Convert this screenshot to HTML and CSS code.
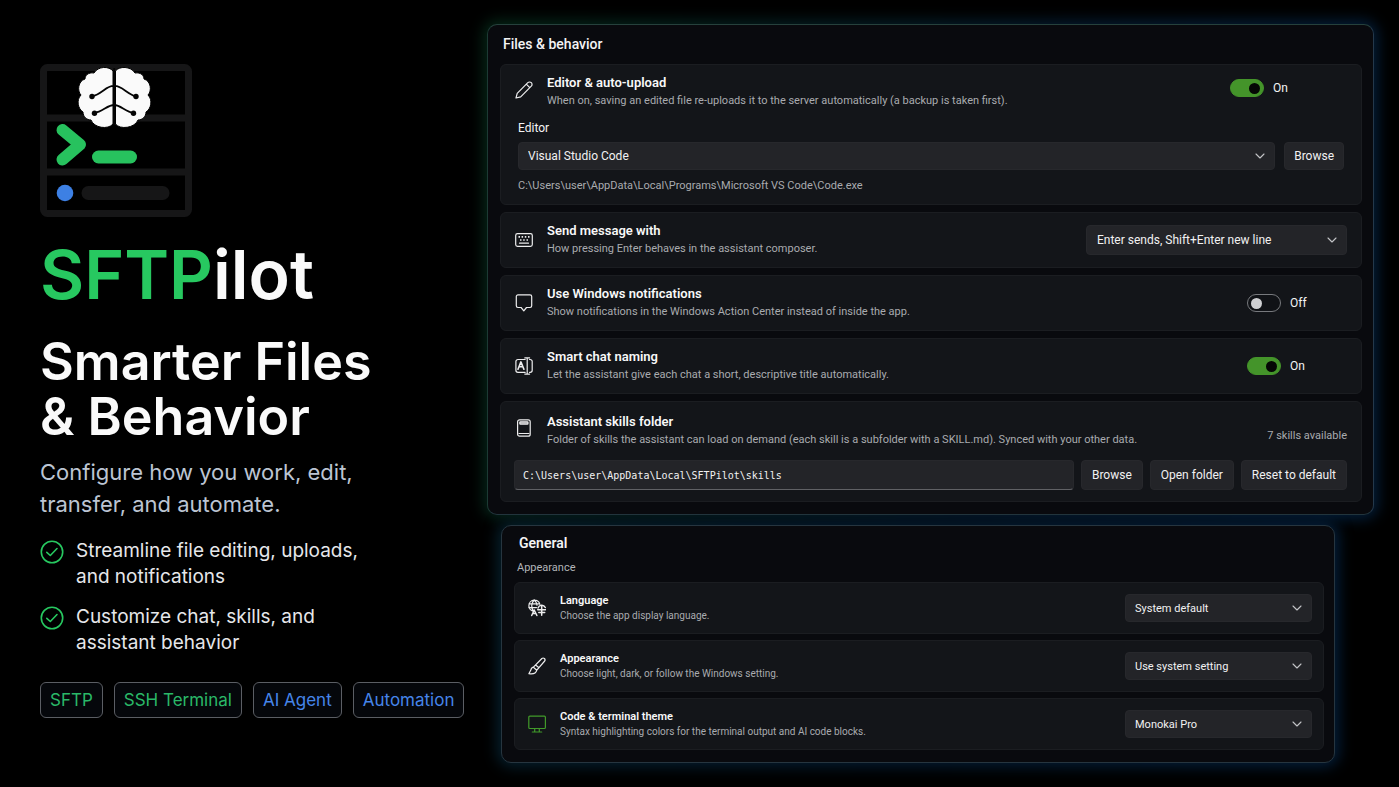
FILE: index.html
```html
<!DOCTYPE html>
<html lang="en">
<head>
<meta charset="utf-8">
<title>SFTPilot – Files &amp; behavior</title>
<link rel="stylesheet" href="styles.css">
</head>
<body>
<main class="page">
  <section class="intro">
    <svg class="logo" viewBox="0 0 152 153" aria-hidden="true">
      <rect x="3.500" y="3.500" width="145" height="146" rx="4" fill="#000" stroke="#161617" stroke-width="7"/>
      <path d="M5 54h142M5 108h142" stroke="#161617" stroke-width="7"/>
      <g fill="#fafafa" stroke="#000" stroke-width="1">
        <path d="M73 7C69 2 58 2 54 9C48 8 45 12 45 15C38 17 37 27 41 31C36 36 38 45 43 48C43 53 47 56 51 56C54 64 68 66 73 60Z"/>
        <path d="M75.500 7C79 2 91 2 95 9C101 8 104 12 104 15C111 17 112 27 108 31C113 36 111 45 106 48C106 53 102 56 98 56C95 64 80 66 75.500 60Z"/>
      </g>
      <path d="M74.200 4V61M74.200 22C67 21 62 30 52 32.500M74.200 22C81 21 87 30 96 32.500M74.200 41C67 41 63 48 54 49M74.200 41C81 41 85 48 94 49" fill="none" stroke="#050505" stroke-width="1.800"/>
      <g fill="#050505"><circle cx="52" cy="32.500" r="2.700"/><circle cx="96" cy="32.500" r="2.700"/><circle cx="54.500" cy="49.200" r="2.700"/><circle cx="93.500" cy="49.200" r="2.700"/></g>
      <path d="M22.500 66L40 80.500L22.500 95.500" fill="none" stroke="#27c25e" stroke-width="12" stroke-linecap="round" stroke-linejoin="round"/>
      <rect x="52" y="86.500" width="45" height="13" rx="6.500" fill="#27c25e"/>
      <circle cx="25" cy="129" r="8.300" fill="#3d80e4"/>
      <rect x="41.500" y="122" width="88" height="14" rx="7" fill="#161617"/>
    </svg>
    <h1 class="brand"><span class="brand-accent">SFTP</span>ilot</h1>
    <h2 class="headline">Smarter Files<br>&amp; Behavior</h2>
    <p class="lead">Configure how you work, edit,<br>transfer, and automate.</p>
    <ul class="points">
      <li class="point">
        <svg class="check" viewBox="0 0 24 24" aria-hidden="true"><circle cx="12" cy="12" r="10.700"/><path d="M6.800 12.300L10.300 15.500L17 8.500"/></svg>
        <span>Streamline file editing, uploads,<br>and notifications</span>
      </li>
      <li class="point">
        <svg class="check" viewBox="0 0 24 24" aria-hidden="true"><circle cx="12" cy="12" r="10.700"/><path d="M6.800 12.300L10.300 15.500L17 8.500"/></svg>
        <span>Customize chat, skills, and<br>assistant behavior</span>
      </li>
    </ul>
    <ul class="tags">
      <li class="tag tag-green">SFTP</li>
      <li class="tag tag-green">SSH Terminal</li>
      <li class="tag tag-blue">AI Agent</li>
      <li class="tag tag-blue">Automation</li>
    </ul>
  </section>

  <div class="panels">
    <section class="panel panel-files">
      <h2 class="panel-title">Files &amp; behavior</h2>
      <div class="cards">
        <article class="card card-editor">
          <div class="row row-top">
            <svg class="icon" viewBox="0 0 18 18" aria-hidden="true"><path d="M1 17L2.200 12.300L12.800 1.700A2.100 2.100 0 0 1 16.300 5.200L5.700 15.800ZM11.300 3.200L14.800 6.700"/></svg>
            <div class="text">
              <h3 class="title">Editor &amp; auto-upload</h3>
              <p class="desc">When on, saving an edited file re-uploads it to the server automatically (a backup is taken first).</p>
            </div>
            <label class="toggle toggle-wide"><input class="switch" type="checkbox" checked><span>On</span></label>
          </div>
          <label class="field-label" for="editor">Editor</label>
          <div class="field-row">
            <div class="select grow">
              <select id="editor" class="control"><option>Visual Studio Code</option></select>
              <svg class="chevron" viewBox="0 0 10 6" aria-hidden="true"><path d="M1 1L5 5L9 1"/></svg>
            </div>
            <button class="control button" type="button">Browse</button>
          </div>
          <p class="desc path">C:\Users\user\AppData\Local\Programs\Microsoft VS Code\Code.exe</p>
        </article>

        <article class="card card-line">
          <div class="row">
            <svg class="icon" viewBox="0 0 18 18" aria-hidden="true"><rect x=".7" y="2.700" width="16.600" height="12.600" rx="1.800"/><path d="M4.500 12.200H13.500"/><path d="M3.500 5.900h1.500M6.600 5.900h1.500M9.800 5.900h1.500M13 5.900h1.500M5 9h1.500M8.200 9h1.500M11.500 9h1.500" stroke-linecap="butt" stroke-width="1.700"/></svg>
            <div class="text">
              <h3 class="title" id="send-title">Send message with</h3>
              <p class="desc">How pressing Enter behaves in the assistant composer.</p>
            </div>
            <div class="select select-send">
              <select class="control" aria-labelledby="send-title"><option>Enter sends, Shift+Enter new line</option></select>
              <svg class="chevron" viewBox="0 0 10 6" aria-hidden="true"><path d="M1 1L5 5L9 1"/></svg>
            </div>
          </div>
        </article>

        <article class="card card-line">
          <div class="row">
            <svg class="icon" viewBox="0 0 18 18" aria-hidden="true"><path d="M3 .9H15A1.700 1.700 0 0 1 16.700 2.600V11.800A1.700 1.700 0 0 1 15 13.500H11.500L8.800 16.800L6.100 13.500H3A1.700 1.700 0 0 1 1.300 11.800V2.600A1.700 1.700 0 0 1 3 .9Z"/></svg>
            <div class="text">
              <h3 class="title">Use Windows notifications</h3>
              <p class="desc">Show notifications in the Windows Action Center instead of inside the app.</p>
            </div>
            <label class="toggle"><input class="switch" type="checkbox"><span>Off</span></label>
          </div>
        </article>

        <article class="card card-line">
          <div class="row">
            <svg class="icon" viewBox="0 0 18 18" aria-hidden="true"><path d="M10.200 2.500H2.900A2 2 0 0 0 .9 4.500V13.300A2 2 0 0 0 2.900 15.300H10.200M14.500 2.500H15.200A2 2 0 0 1 17.200 4.500V13.300A2 2 0 0 1 15.200 15.300H14.500M9.800 .9H14.600M12.200 .9V17.100M9.800 17.100H14.600"/><path d="M3 12.200L5.900 4.900L8.900 12.200M4 9.800H7.900" stroke-width="1.600"/></svg>
            <div class="text">
              <h3 class="title">Smart chat naming</h3>
              <p class="desc">Let the assistant give each chat a short, descriptive title automatically.</p>
            </div>
            <label class="toggle"><input class="switch" type="checkbox" checked><span>On</span></label>
          </div>
        </article>

        <article class="card card-skills">
          <div class="row">
            <svg class="icon" viewBox="0 0 18 18" aria-hidden="true"><rect x="2.600" y=".8" width="12.600" height="16.400" rx="2"/><rect x="4.800" y="2.800" width="8.200" height="2.300" rx=".6" fill="#9a9b9e"/><path d="M4 14.500H14"/></svg>
            <div class="text">
              <h3 class="title" id="skills-title">Assistant skills folder</h3>
              <p class="desc">Folder of skills the assistant can load on demand (each skill is a subfolder with a SKILL.md). Synced with your other data.</p>
            </div>
            <p class="desc count">7 skills available</p>
          </div>
          <div class="skills-row">
            <input class="control folder" type="text" aria-labelledby="skills-title" value="C:\Users\user\AppData\Local\SFTPilot\skills">
            <button class="control button" type="button">Browse</button>
            <button class="control button" type="button">Open folder</button>
            <button class="control button" type="button">Reset to default</button>
          </div>
        </article>
      </div>
    </section>

    <section class="panel panel-general">
      <h2 class="panel-title">General</h2>
      <p class="group">Appearance</p>
      <div class="cards">
        <article class="card card-line">
          <div class="row">
            <svg class="icon" viewBox="0 0 18 18" aria-hidden="true"><path d="M6 12.300A5.600 5.600 0 1 1 11.900 5.300M1 4.800H11M.8 8.600H8.500M6.300 1C3 4 3 9 5.500 12.200M6.300 1C8 2.500 8.900 4.300 9 6.200"/><path d="M3.700 16.500L6.200 11L8.900 16.500M4.800 14.600H7.800M10 9A4 4 0 0 1 17.300 8.500M9.700 10.700H17.500M13.700 7.500V16.200M10.800 13.500H16.700" stroke-width="1.500"/></svg>
            <div class="text">
              <h3 class="title" id="language-title">Language</h3>
              <p class="desc">Choose the app display language.</p>
            </div>
            <div class="select select-general">
              <select class="control" aria-labelledby="language-title"><option>System default</option></select>
              <svg class="chevron" viewBox="0 0 10 6" aria-hidden="true"><path d="M1 1L5 5L9 1"/></svg>
            </div>
          </div>
        </article>
        <article class="card card-line">
          <div class="row">
            <svg class="icon" viewBox="0 0 18 18" aria-hidden="true"><path d="M5.400 10.200L13.900 1.500A1.900 1.900 0 0 1 16.700 4L8.800 13.200M5.400 10.200C3.900 10.200 3.200 11.500 2.700 13.300L.9 16.700C4.500 17.300 8 16.500 8.800 13.200ZM5.400 10.200L8.800 13.200M7.600 8L11 10.700"/></svg>
            <div class="text">
              <h3 class="title" id="appearance-title">Appearance</h3>
              <p class="desc">Choose light, dark, or follow the Windows setting.</p>
            </div>
            <div class="select select-general">
              <select class="control" aria-labelledby="appearance-title"><option>Use system setting</option></select>
              <svg class="chevron" viewBox="0 0 10 6" aria-hidden="true"><path d="M1 1L5 5L9 1"/></svg>
            </div>
          </div>
        </article>
        <article class="card card-line">
          <div class="row">
            <svg class="icon icon-green" viewBox="0 0 18 18" aria-hidden="true"><rect x=".8" y="1.200" width="16.600" height="12.300" rx="1"/><path d="M6.700 13.500V17M11.300 13.500V17M4.300 17H13.700"/></svg>
            <div class="text">
              <h3 class="title" id="theme-title">Code &amp; terminal theme</h3>
              <p class="desc">Syntax highlighting colors for the terminal output and AI code blocks.</p>
            </div>
            <div class="select select-general">
              <select class="control" aria-labelledby="theme-title"><option>Monokai Pro</option></select>
              <svg class="chevron" viewBox="0 0 10 6" aria-hidden="true"><path d="M1 1L5 5L9 1"/></svg>
            </div>
          </div>
        </article>
      </div>
    </section>
  </div>
</main>
</body>
</html>
```
FILE: styles.css
```css
* {
  box-sizing: border-box;
}

body {
  margin: 0;
  background: #000;
  color: #f4f4f5;
  font-family: Roboto, "Liberation Sans", sans-serif;
}

h1, h2, h3, p, ul {
  margin: 0;
  padding: 0;
}

ul {
  list-style: none;
}

.page {
  display: grid;
  grid-template-columns: minmax(0, 429fr) minmax(0, 887fr);
  column-gap: 18px;
  padding: 24px 25px 24px 40px;
}

/* Intro column */

.intro {
  padding-top: 40px;
  font-family: Inter, "Liberation Sans", sans-serif;
}

.logo {
  display: block;
  width: 152px;
  height: 153px;
}

.brand {
  margin-top: 23px;
  font-size: 68px;
  font-weight: 600;
  line-height: 68px;
  color: #fafafa;
}

.brand-accent {
  color: #27c860;
}

.headline {
  margin-top: 26px;
  font-size: 52px;
  font-weight: 600;
  line-height: 55px;
  color: #fafafa;
  white-space: nowrap;
}

.lead {
  margin-top: 12px;
  font-size: 22px;
  line-height: 32px;
  color: #bcc5d3;
}

.points {
  display: grid;
  gap: 14px;
  margin-top: 18px;
}

.point {
  display: flex;
  gap: 12px;
  font-size: 19px;
  line-height: 26px;
  color: #e6e7ea;
}

.check {
  flex: none;
  width: 24px;
  height: 24px;
  margin-top: 2px;
  fill: none;
  stroke: #27c860;
  stroke-width: 1.6;
  stroke-linecap: round;
  stroke-linejoin: round;
}

.tags {
  display: flex;
  gap: 11px;
  margin-top: 26px;
}

.tag {
  padding: 0 9px;
  border: 1px solid #5b5e64;
  border-radius: 6px;
  background: #05070b;
  font-size: 17px;
  line-height: 34px;
  white-space: nowrap;
}

.tag-green {
  color: #2ab868;
}

.tag-blue {
  color: #4585ea;
}

/* Panels */

.panels {
  display: grid;
  gap: 10px;
  align-content: start;
  isolation: isolate;
}

.panel {
  position: relative;
  border: 1px solid #26353f;
  border-radius: 10px;
  background: #090a0e;
  padding: 0 11px 12px 12px;
}

.panel::before {
  content: "";
  position: absolute;
  inset: -5px;
  z-index: -1;
  border-radius: 15px;
  filter: blur(7px);
}

.panel-files {
  border-color: #26413c #24384a #22343c #1d3a34;
}

.panel-files::before {
  background: linear-gradient(100deg, #052616 0%, #041e1d 25%, #041a2e 60%, #031e3a 100%);
}

.panel-general {
  margin: 0 39px 0 14px;
  padding-right: 10px;
}

.panel-general::before {
  background: linear-gradient(100deg, #051f2b 0%, #031a30 50%, #031e3a 100%);
}

.panel-title {
  font-size: 14px;
  font-weight: 500;
  line-height: 20px;
}

.panel-files .panel-title {
  padding: 9px 3px 10px;
}

.panel-general .panel-title {
  padding: 7px 5px 0;
  font-weight: 600;
}

.group {
  padding: 7px 3px 6px;
  font-size: 11px;
  line-height: 16px;
  color: #b2b4b8;
}

.cards {
  display: grid;
  gap: 7px;
}

.panel-general .cards {
  gap: 6px;
}

.card {
  border: 1px solid #1b1d21;
  border-radius: 6px;
  background: #131519;
}

.card-line {
  display: grid;
  align-items: center;
  min-height: 56px;
  padding: 0 14px;
}

.panel-general .card-line {
  min-height: 52px;
  padding: 0 11px 0 13px;
}

.card-editor {
  padding: 9px 17px;
}

.card-skills {
  padding: 11px 14px 11px 13px;
}

.row {
  display: flex;
  align-items: center;
  gap: 14px;
}

.card-editor .row {
  margin-left: -3px;
  align-items: flex-start;
}

.card-editor .icon {
  margin-top: 7px;
}

.card-skills .icon {
  margin: 0 0 6px 1px;
}

.icon {
  flex: none;
  width: 18px;
  height: 18px;
  fill: none;
  stroke: #ededee;
  stroke-width: 1.2;
  stroke-linecap: round;
  stroke-linejoin: round;
}

.icon-green {
  stroke: #419a2a;
}

.text {
  flex: 1;
  min-width: 0;
}

.title {
  font-size: 13px;
  font-weight: 600;
  line-height: 18px;
  color: #f8f8f8;
}

.desc {
  font-size: 11px;
  line-height: 18px;
  color: #a9abaf;
}

.panel-general .title {
  font-size: 11px;
  line-height: 15px;
}

.panel-general .desc {
  font-size: 10px;
  line-height: 15px;
}

.count {
  align-self: flex-end;
  line-height: 26px;
}

/* Controls */

.control {
  height: 28px;
  border: 1px solid #27282c;
  border-radius: 4px;
  background: #232428;
  color: #f1f1f2;
  font-family: inherit;
  font-size: 12px;
}

.button {
  padding: 0 9px;
  white-space: nowrap;
}

.select {
  position: relative;
}

.select .control {
  display: block;
  width: 100%;
  padding: 0 30px 0 9px;
  appearance: none;
}

.chevron {
  position: absolute;
  top: 50%;
  right: 10px;
  width: 10px;
  height: 6px;
  margin-top: -3px;
  fill: none;
  stroke: #c3c4c7;
  stroke-width: 1.1;
  stroke-linecap: round;
  stroke-linejoin: round;
  pointer-events: none;
}

.grow {
  flex: 1;
}

.select-send {
  width: 261px;
}

.select-send .control {
  height: 30px;
  padding-left: 10px;
}

.select-general {
  width: 187px;
}

.select-general .control {
  font-size: 11px;
}

.field-label {
  display: block;
  margin-top: 9px;
  font-size: 12px;
  line-height: 18px;
}

.field-row {
  display: flex;
  gap: 9px;
  margin-top: 5px;
}

.path {
  margin-top: 7px;
}

.skills-row {
  display: flex;
  gap: 7px;
  margin-top: 11px;
}

.skills-row .control {
  height: 30px;
}

.skills-row .button {
  padding: 0 10px;
}

.folder {
  flex: 1;
  min-width: 0;
  padding: 0 8px;
  border-bottom-color: #606165;
  font-family: "DejaVu Sans Mono", monospace;
  font-size: 10px;
}

.toggle {
  display: flex;
  align-items: center;
  gap: 9px;
  width: 100px;
  height: 28px;
  font-size: 12px;
}

.toggle-wide {
  width: 114px;
}

.switch {
  display: flex;
  align-items: center;
  flex: none;
  width: 34px;
  height: 18px;
  margin: 0;
  padding: 0 3px;
  border: 1px solid #77797d;
  border-radius: 9px;
  background: #101216;
  appearance: none;
}

.switch::before {
  content: "";
  width: 11px;
  height: 11px;
  border-radius: 50%;
  background: #cfd0d3;
}

.switch:checked {
  justify-content: flex-end;
  border-color: #44942a;
  background: #44942a;
}

.switch:checked::before {
  background: #050805;
}
```
